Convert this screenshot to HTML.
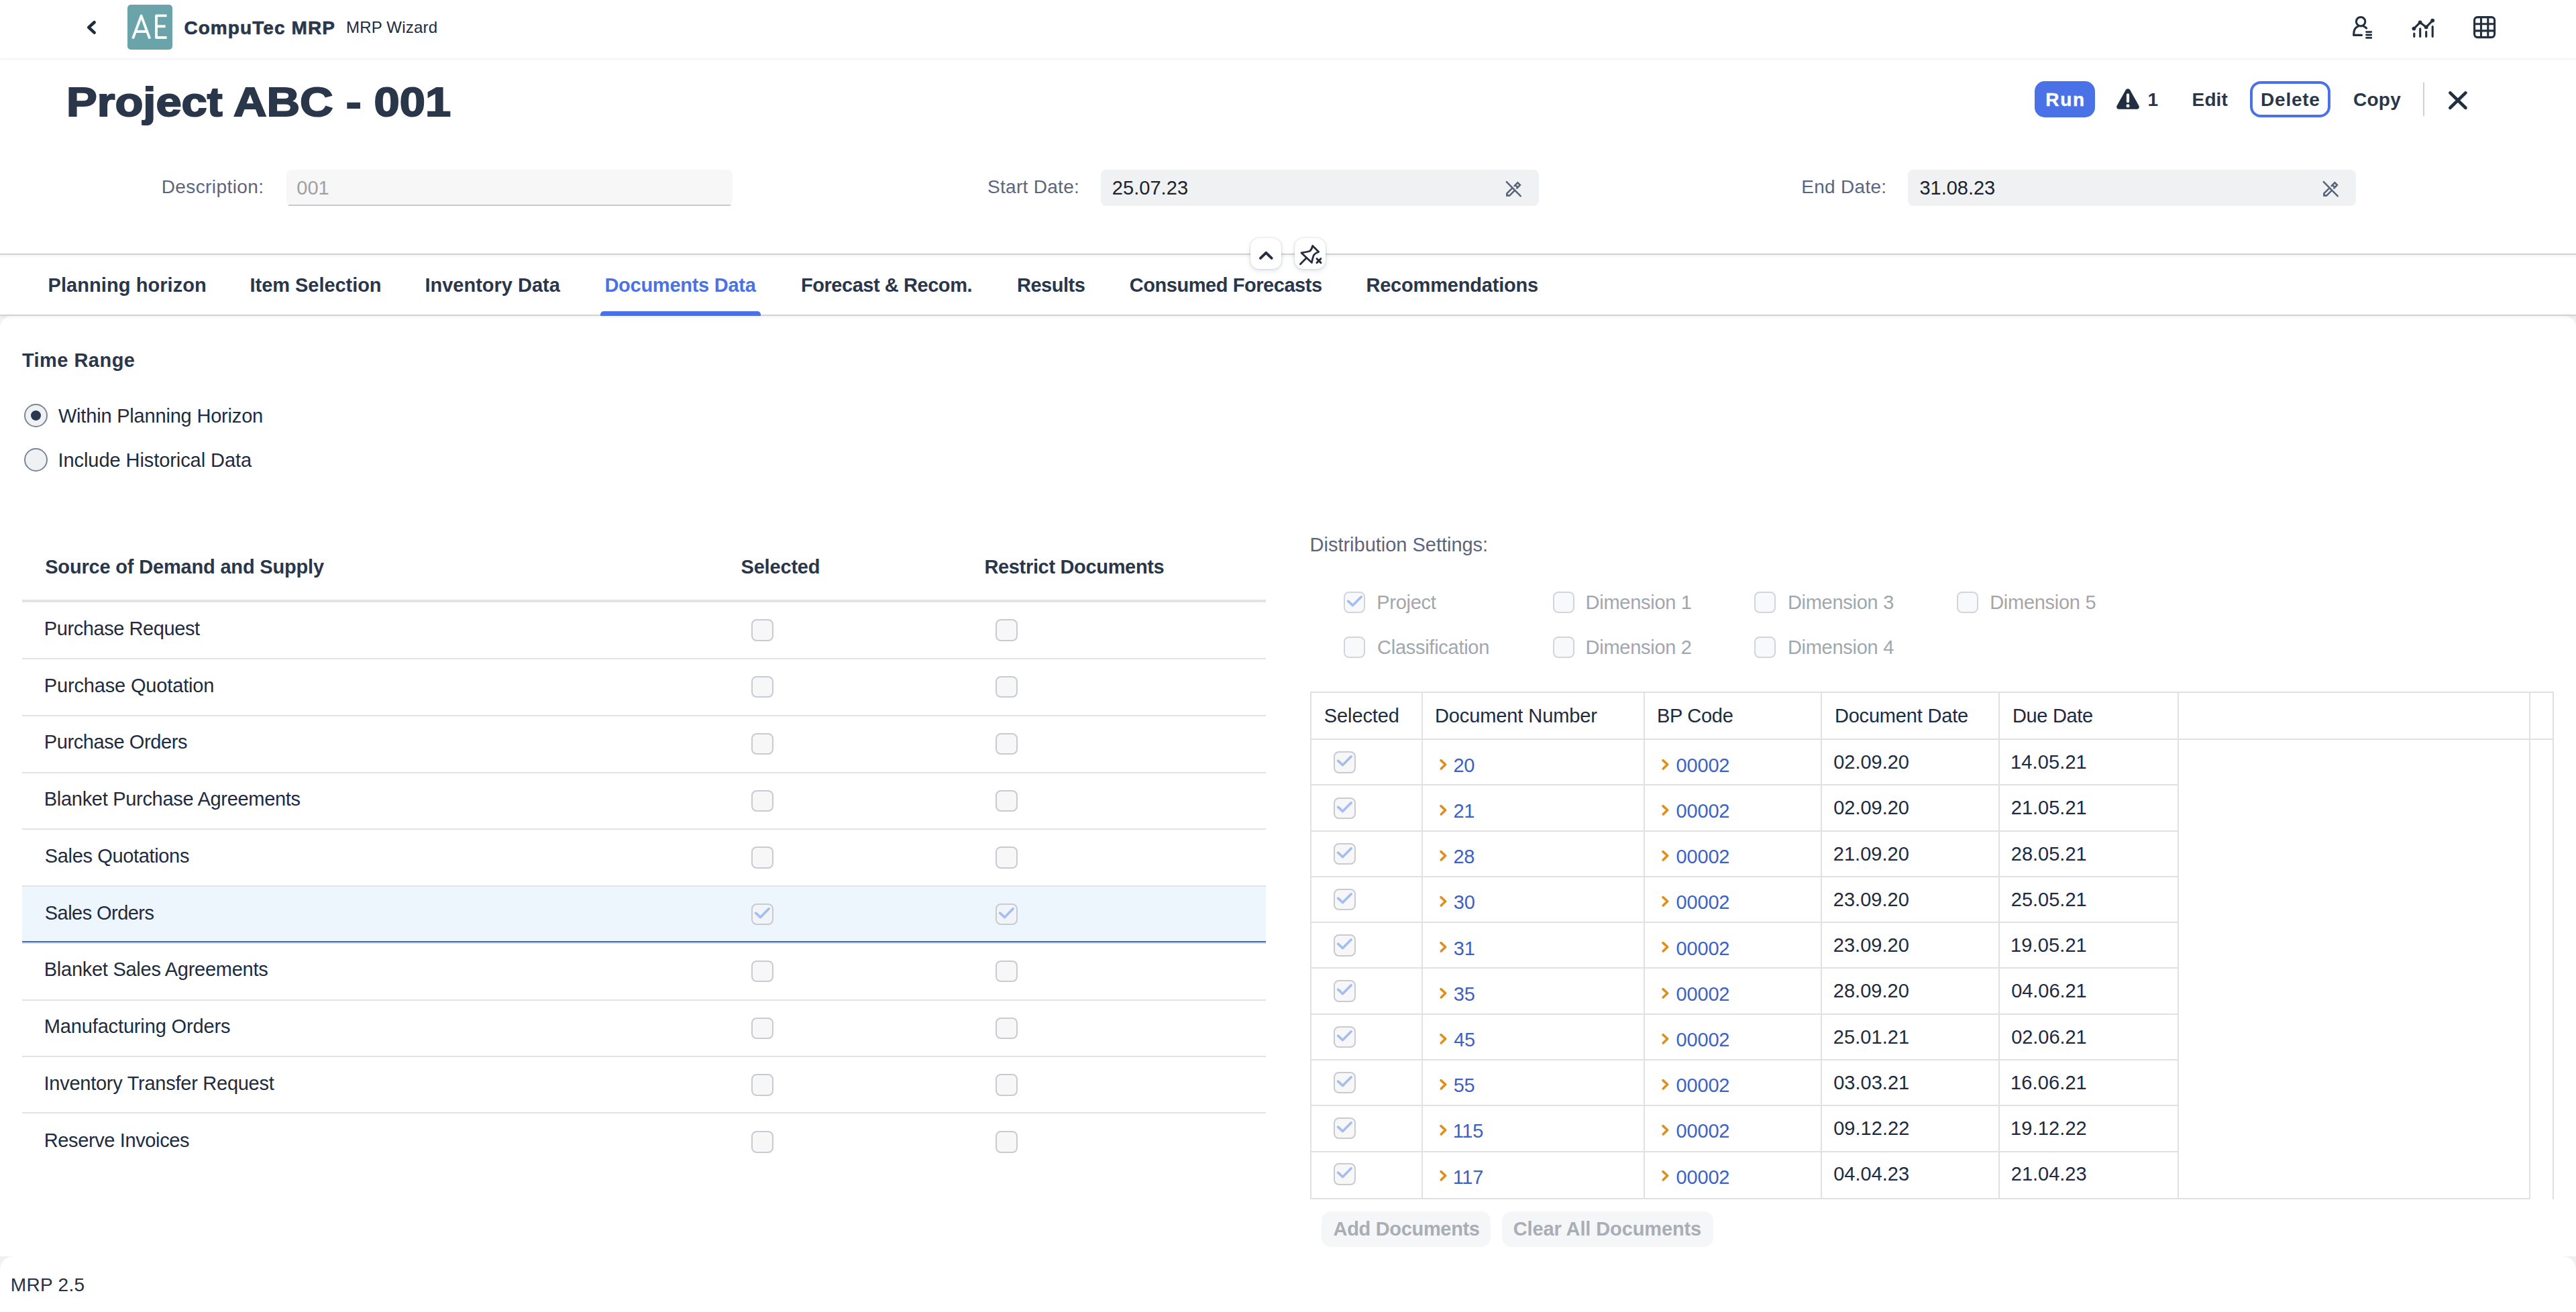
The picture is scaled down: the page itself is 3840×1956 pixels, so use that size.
<!DOCTYPE html>
<html><head><meta charset="utf-8"><title>MRP Wizard</title>
<style>
html,body{margin:0;padding:0;background:#fff;}
body{width:3840px;height:1956px;position:relative;overflow:hidden;font-family:"Liberation Sans",sans-serif;}
.t{position:absolute;white-space:nowrap;}
.b{position:absolute;}
</style></head><body>
<div class="b" style="left:0px;top:471px;width:3840px;height:40px;background:#f2f2f3"></div>
<div class="b" style="left:0px;top:471px;width:3840px;height:1402px;background:#fff;border-radius:18px 18px 0 0"></div>
<div class="b" style="left:0px;top:1873px;width:3840px;height:83px;background:#f0f0f1"></div>
<div class="b" style="left:0px;top:1873px;width:3840px;height:83px;background:#fff;border-radius:20px 20px 0 0"></div>
<div class="b" style="left:0px;top:0px;width:3840px;height:87px;background:#fff;box-shadow:0 1px 3px rgba(0,0,0,.08)"></div>
<svg class="b" style="left:120px;top:22px" width="36" height="38" viewBox="0 0 36 38"><path d="M20.6 11.2 L12.2 18.9 L20.6 26.6" fill="none" stroke="#1d2d3e" stroke-width="4.6" stroke-linecap="round" stroke-linejoin="round"/></svg>
<div class="b" style="left:190px;top:7px;width:67px;height:67px;background:#6ba3aa;border-radius:5px"></div>
<svg class="b" style="left:190px;top:7px" width="67" height="67" viewBox="0 0 67 67"><g fill="none" stroke="#fff" stroke-width="3.9" stroke-linejoin="round" opacity=".96"><path d="M8 50.6 L20.6 16.6 L33.2 50.6 M12 40 L29.2 40"/><path d="M58.6 16.4 L43 16.4 L43 49 L58.6 49 M43 32.2 L56.6 32.2"/></g></svg>
<div class="t" style="left:274.4px;top:28px;font-size:28px;line-height:28px;font-weight:700;color:#2a364a;letter-spacing:1.08px;-webkit-text-stroke:0.6px #2a364a;">CompuTec MRP</div>
<div class="t" style="left:516.0px;top:29px;font-size:24px;line-height:24px;font-weight:400;color:#202b3f;letter-spacing:0.20px;">MRP Wizard</div>
<svg class="b" style="left:3500px;top:18.5px" width="44" height="44" viewBox="0 0 44 44"><g fill="none" stroke="#222f40" stroke-width="3.1" stroke-linecap="round" stroke-linejoin="round">
<circle cx="19.1" cy="13.2" r="6.7"/><path d="M20.5 33.4 L8.6 33.4 C8.6 25 12 21.5 15 20.6 M23.5 20.4 C25 20.9 26.6 21.8 27.6 23"/>
<path d="M27.5 28.6 L34.8 28.6 M27.5 33 L34.8 33 M27.5 37.4 L34.8 37.4" stroke-width="2.8"/></g></svg>
<svg class="b" style="left:3590px;top:18px" width="44" height="44" viewBox="0 0 44 44"><g fill="none" stroke="#222f40" stroke-width="3.1" stroke-linecap="round" stroke-linejoin="round">
<path d="M8.4 24.6 L17.6 15.4 L26.7 22.4 L36.2 12.6"/><path d="M8.8 32 L8.8 36.4 M17.7 24.8 L17.7 36.4 M26.7 29.4 L26.7 36.4 M36.2 21.6 L36.2 36.4"/></g>
<g fill="#222f40"><circle cx="8.4" cy="24.6" r="2.9"/><circle cx="17.6" cy="15.4" r="2.9"/><circle cx="26.7" cy="22.4" r="2.9"/><circle cx="36.2" cy="12.6" r="2.9"/></g></svg>
<svg class="b" style="left:3680px;top:18px" width="44" height="44" viewBox="0 0 44 44"><g fill="none" stroke="#222f40" stroke-width="3.1">
<rect x="8.6" y="7.6" width="30" height="30" rx="4.5"/><path d="M18.5 7.6 V37.6 M28.8 7.6 V37.6 M8.6 17.8 H38.6 M8.6 27.9 H38.6"/></g></svg>
<div class="t" style="left:99.0px;top:121px;font-size:62px;line-height:62px;font-weight:700;color:#2a364a;-webkit-text-stroke:2.0px #2a364a;transform-origin:0 0;transform:scaleX(1.1063)">Project ABC - 001</div>
<div class="b" style="left:3033px;top:121px;width:90px;height:53.5px;background:#4a72e6;border-radius:15px"></div>
<div class="t" style="left:3049.3px;top:135px;font-size:28px;line-height:28px;font-weight:700;color:#fff;letter-spacing:1.74px;-webkit-text-stroke:0.4px #fff;">Run</div>
<svg class="b" style="left:3152px;top:128px" width="40" height="40" viewBox="0 0 40 40"><path d="M20 4.2 C21.6 4.2 22.6 5 23.3 6.2 L36.3 29.5 C37.8 32.2 36.2 34.8 33.2 34.8 L6.8 34.8 C3.8 34.8 2.2 32.2 3.7 29.5 L16.7 6.2 C17.4 5 18.4 4.2 20 4.2 Z" fill="#222f40"/><path d="M20 13.4 V23.2" stroke="#fff" stroke-width="4.2" stroke-linecap="round"/><circle cx="20" cy="29.8" r="2.5" fill="#fff"/></svg>
<div class="t" style="left:3201.5px;top:135px;font-size:28px;line-height:28px;font-weight:700;color:#2a364a;letter-spacing:0.00px;">1</div>
<div class="t" style="left:3267.6px;top:135px;font-size:28px;line-height:28px;font-weight:700;color:#2a364a;letter-spacing:0.11px;">Edit</div>
<div class="b" style="left:3354px;top:121px;width:120px;height:53.5px;box-sizing:border-box;border:4px solid #4a72e6;border-radius:16px;background:#fff"></div>
<div class="t" style="left:3370.1px;top:135px;font-size:28px;line-height:28px;font-weight:700;color:#2a364a;letter-spacing:0.76px;">Delete</div>
<div class="t" style="left:3507.9px;top:135px;font-size:28px;line-height:28px;font-weight:700;color:#2a364a;letter-spacing:0.27px;">Copy</div>
<div class="b" style="left:3612px;top:123px;width:2px;height:50px;background:#d0d0d3"></div>
<svg class="b" style="left:3644px;top:130px" width="40" height="40" viewBox="0 0 40 40"><path d="M8.4 8.4 L31.4 30.8 M31.4 8.4 L8.4 30.8" stroke="#222f40" stroke-width="4.7" stroke-linecap="round"/></svg>
<div class="t" style="left:240.7px;top:265px;font-size:28px;line-height:28px;font-weight:400;color:#5a6680;letter-spacing:0.41px;">Description:</div>
<div class="b" style="left:427px;top:253px;width:665px;height:53.5px;background:#f7f7f8;border-radius:8px"></div>
<div class="b" style="left:430px;top:305px;width:659px;height:2px;background:#c6c9cf"></div>
<div class="t" style="left:442.2px;top:266px;font-size:29px;line-height:29px;font-weight:400;color:#9fa0a3;letter-spacing:0.08px;">001</div>
<div class="t" style="left:1472.0px;top:265px;font-size:28px;line-height:28px;font-weight:400;color:#5a6680;letter-spacing:0.30px;">Start Date:</div>
<div class="b" style="left:1641px;top:253px;width:653px;height:53.5px;background:#eff1f2;border-radius:8px"></div>
<div class="t" style="left:1657.8px;top:266px;font-size:29px;line-height:29px;font-weight:400;color:#1d222c;letter-spacing:0.05px;">25.07.23</div>
<svg class="b" style="left:2240px;top:266px" width="32" height="32" viewBox="0 0 32 32"><g fill="none" stroke="#586377" stroke-width="2.5" stroke-linecap="round" stroke-linejoin="round">
<path d="M5.8 5.1 L26.8 26.4"/>
<path d="M13.4 15.3 L6.5 22.2 L6.5 25.55 L10.25 25.55 L17.4 18.4"/>
<path d="M17.6 11.1 L22.4 6.3 L25.95 9.85 L21.3 14.5 M18.86 9.84 L22.41 13.39" stroke-linejoin="miter"/></g>
<path d="M5.25 21.8 L5.25 26.8 L10.6 26.8 Z" fill="#586377"/></svg>
<div class="t" style="left:2685.3px;top:265px;font-size:28px;line-height:28px;font-weight:400;color:#5a6680;letter-spacing:0.29px;">End Date:</div>
<div class="b" style="left:2844px;top:253px;width:668px;height:53.5px;background:#eff1f2;border-radius:8px"></div>
<div class="t" style="left:2861.5px;top:266px;font-size:29px;line-height:29px;font-weight:400;color:#1d222c;letter-spacing:-0.03px;">31.08.23</div>
<svg class="b" style="left:3458px;top:266px" width="32" height="32" viewBox="0 0 32 32"><g fill="none" stroke="#586377" stroke-width="2.5" stroke-linecap="round" stroke-linejoin="round">
<path d="M5.8 5.1 L26.8 26.4"/>
<path d="M13.4 15.3 L6.5 22.2 L6.5 25.55 L10.25 25.55 L17.4 18.4"/>
<path d="M17.6 11.1 L22.4 6.3 L25.95 9.85 L21.3 14.5 M18.86 9.84 L22.41 13.39" stroke-linejoin="miter"/></g>
<path d="M5.25 21.8 L5.25 26.8 L10.6 26.8 Z" fill="#586377"/></svg>
<div class="b" style="left:0px;top:378px;width:3840px;height:2px;background:#d2d2d5;box-shadow:0 1px 4px rgba(0,0,0,.10)"></div>
<div class="b" style="left:1863.6px;top:355px;width:46.4px;height:46.4px;background:#fff;border-radius:13px;box-shadow:0 0 3px rgba(34,53,72,.22),0 3px 7px rgba(34,53,72,.13)"></div>
<svg class="b" style="left:1863.5px;top:355px" width="47" height="47" viewBox="0 0 47 47"><path d="M15 29.9 L23.3 21.9 L31.6 29.9" fill="none" stroke="#262c42" stroke-width="4" stroke-linecap="round" stroke-linejoin="round"/></svg>
<div class="b" style="left:1929.8px;top:355px;width:46.4px;height:46.4px;background:#fff;border-radius:13px;box-shadow:0 0 3px rgba(34,53,72,.22),0 3px 7px rgba(34,53,72,.13)"></div>
<svg class="b" style="left:1929.5px;top:355px" width="47" height="47" viewBox="0 0 47 47"><g fill="none" stroke="#262c42" stroke-width="2.8" stroke-linecap="round" stroke-linejoin="round">
<path d="M26.7 11.4 L35.7 20.5 Q30.4 22.4 28.3 25.6 Q26.4 30.6 25.4 36.6 L10 21.9 Q17.4 20.8 22.3 19.5 Q25.6 16.8 26.7 11.4 Z"/><path d="M16.8 30.3 L8.4 38.8"/>
<path d="M33 30.7 L38.9 36.6 M38.9 30.7 L33 36.6" stroke-width="3"/></g></svg>
<div class="t" style="left:71.6px;top:411px;font-size:29px;line-height:29px;font-weight:700;color:#2a364a;letter-spacing:0.06px;">Planning horizon</div>
<div class="t" style="left:372.6px;top:411px;font-size:29px;line-height:29px;font-weight:700;color:#2a364a;letter-spacing:-0.05px;">Item Selection</div>
<div class="t" style="left:633.4px;top:411px;font-size:29px;line-height:29px;font-weight:700;color:#2a364a;letter-spacing:0.00px;">Inventory Data</div>
<div class="t" style="left:901.4px;top:411px;font-size:29px;line-height:29px;font-weight:700;color:#4a72e6;letter-spacing:-0.26px;">Documents Data</div>
<div class="t" style="left:1193.9px;top:411px;font-size:29px;line-height:29px;font-weight:700;color:#2a364a;letter-spacing:-0.44px;">Forecast &amp; Recom.</div>
<div class="t" style="left:1516.0px;top:411px;font-size:29px;line-height:29px;font-weight:700;color:#2a364a;letter-spacing:-0.50px;">Results</div>
<div class="t" style="left:1683.7px;top:411px;font-size:29px;line-height:29px;font-weight:700;color:#2a364a;letter-spacing:-0.44px;">Consumed Forecasts</div>
<div class="t" style="left:2036.4px;top:411px;font-size:29px;line-height:29px;font-weight:700;color:#2a364a;letter-spacing:-0.19px;">Recommendations</div>
<div class="b" style="left:0px;top:469px;width:3840px;height:2px;background:#d2d2d5;box-shadow:0 1px 4px rgba(0,0,0,.10)"></div>
<div class="b" style="left:895px;top:464px;width:239px;height:7px;background:#4a72e6;border-radius:5px 5px 0 0"></div>
<div class="t" style="left:32.9px;top:523px;font-size:29px;line-height:29px;font-weight:700;color:#2a364a;letter-spacing:0.47px;">Time Range</div>
<div class="b" style="left:36px;top:601.9px;width:35px;height:35px;box-sizing:border-box;border:2px solid #7b879a;border-radius:50%;background:#f0f1f3"></div>
<div class="b" style="left:46.1px;top:612.0px;width:14.8px;height:14.8px;border-radius:50%;background:#29384c"></div>
<div class="t" style="left:86.9px;top:606px;font-size:29px;line-height:29px;font-weight:400;color:#202b3f;letter-spacing:-0.19px;">Within Planning Horizon</div>
<div class="b" style="left:36px;top:668.1px;width:35px;height:35px;box-sizing:border-box;border:2px solid #7b879a;border-radius:50%;background:#f0f1f3"></div>
<div class="t" style="left:86.5px;top:672px;font-size:29px;line-height:29px;font-weight:400;color:#202b3f;letter-spacing:-0.07px;">Include Historical Data</div>
<div class="t" style="left:67.2px;top:831px;font-size:29px;line-height:29px;font-weight:700;color:#2a364a;letter-spacing:-0.18px;">Source of Demand and Supply</div>
<div class="t" style="left:1104.5px;top:831px;font-size:29px;line-height:29px;font-weight:700;color:#2a364a;letter-spacing:-0.18px;">Selected</div>
<div class="t" style="left:1467.4px;top:831px;font-size:29px;line-height:29px;font-weight:700;color:#2a364a;letter-spacing:-0.33px;">Restrict Documents</div>
<div class="b" style="left:33px;top:894px;width:1854px;height:4px;background:#e3e3e5"></div>
<div class="b" style="left:33px;top:981px;width:1854px;height:2px;background:#e3e3e5"></div>
<div class="t" style="left:65.8px;top:923px;font-size:29px;line-height:29px;font-weight:400;color:#202b3f;letter-spacing:-0.42px;">Purchase Request</div>
<div class="b" style="left:1120.3px;top:923.3px;width:32.4px;height:32.4px;box-sizing:border-box;border:2px solid #c9cbd3;border-radius:8px;background:#f7f7f8"></div>
<div class="b" style="left:1484.2px;top:923.3px;width:32.4px;height:32.4px;box-sizing:border-box;border:2px solid #c9cbd3;border-radius:8px;background:#f7f7f8"></div>
<div class="b" style="left:33px;top:1066px;width:1854px;height:2px;background:#e3e3e5"></div>
<div class="t" style="left:65.8px;top:1008px;font-size:29px;line-height:29px;font-weight:400;color:#202b3f;letter-spacing:-0.16px;">Purchase Quotation</div>
<div class="b" style="left:1120.3px;top:1008.06px;width:32.4px;height:32.4px;box-sizing:border-box;border:2px solid #c9cbd3;border-radius:8px;background:#f7f7f8"></div>
<div class="b" style="left:1484.2px;top:1008.06px;width:32.4px;height:32.4px;box-sizing:border-box;border:2px solid #c9cbd3;border-radius:8px;background:#f7f7f8"></div>
<div class="b" style="left:33px;top:1151px;width:1854px;height:2px;background:#e3e3e5"></div>
<div class="t" style="left:65.8px;top:1092px;font-size:29px;line-height:29px;font-weight:400;color:#202b3f;letter-spacing:-0.40px;">Purchase Orders</div>
<div class="b" style="left:1120.3px;top:1092.82px;width:32.4px;height:32.4px;box-sizing:border-box;border:2px solid #c9cbd3;border-radius:8px;background:#f7f7f8"></div>
<div class="b" style="left:1484.2px;top:1092.82px;width:32.4px;height:32.4px;box-sizing:border-box;border:2px solid #c9cbd3;border-radius:8px;background:#f7f7f8"></div>
<div class="b" style="left:33px;top:1235px;width:1854px;height:2px;background:#e3e3e5"></div>
<div class="t" style="left:65.8px;top:1177px;font-size:29px;line-height:29px;font-weight:400;color:#202b3f;letter-spacing:-0.30px;">Blanket Purchase Agreements</div>
<div class="b" style="left:1120.3px;top:1177.58px;width:32.4px;height:32.4px;box-sizing:border-box;border:2px solid #c9cbd3;border-radius:8px;background:#f7f7f8"></div>
<div class="b" style="left:1484.2px;top:1177.58px;width:32.4px;height:32.4px;box-sizing:border-box;border:2px solid #c9cbd3;border-radius:8px;background:#f7f7f8"></div>
<div class="b" style="left:33px;top:1320px;width:1854px;height:2px;background:#e3e3e5"></div>
<div class="t" style="left:66.8px;top:1262px;font-size:29px;line-height:29px;font-weight:400;color:#202b3f;letter-spacing:-0.35px;">Sales Quotations</div>
<div class="b" style="left:1120.3px;top:1262.34px;width:32.4px;height:32.4px;box-sizing:border-box;border:2px solid #c9cbd3;border-radius:8px;background:#f7f7f8"></div>
<div class="b" style="left:1484.2px;top:1262.34px;width:32.4px;height:32.4px;box-sizing:border-box;border:2px solid #c9cbd3;border-radius:8px;background:#f7f7f8"></div>
<div class="b" style="left:33px;top:1322px;width:1854px;height:82px;background:#edf5fd"></div>
<div class="b" style="left:33px;top:1403px;width:1854px;height:2.2px;background:#4867b4"></div>
<div class="b" style="left:33px;top:1405.2px;width:1854px;height:1.4px;background:#d5e0f5"></div>
<div class="t" style="left:66.8px;top:1347px;font-size:29px;line-height:29px;font-weight:400;color:#202b3f;letter-spacing:-0.55px;">Sales Orders</div>
<div class="b" style="left:1120.3px;top:1347.1px;width:32.4px;height:32.4px;box-sizing:border-box;border:2px solid #c9cbd3;border-radius:8px;background:#f1f5fa"></div>
<svg class="b" style="left:1120.3px;top:1347.1px" width="32.4" height="32.4" viewBox="0 0 32.4 32.4"><path d="M6.6 14.2 L13.6 20.6 L26.2 7.8" fill="none" stroke="#a6bdf1" stroke-width="3.6" stroke-linecap="round" stroke-linejoin="round"/></svg>
<div class="b" style="left:1484.2px;top:1347.1px;width:32.4px;height:32.4px;box-sizing:border-box;border:2px solid #c9cbd3;border-radius:8px;background:#f1f5fa"></div>
<svg class="b" style="left:1484.2px;top:1347.1px" width="32.4" height="32.4" viewBox="0 0 32.4 32.4"><path d="M6.6 14.2 L13.6 20.6 L26.2 7.8" fill="none" stroke="#a6bdf1" stroke-width="3.6" stroke-linecap="round" stroke-linejoin="round"/></svg>
<div class="b" style="left:33px;top:1490px;width:1854px;height:2px;background:#e3e3e5"></div>
<div class="t" style="left:65.8px;top:1431px;font-size:29px;line-height:29px;font-weight:400;color:#202b3f;letter-spacing:-0.27px;">Blanket Sales Agreements</div>
<div class="b" style="left:1120.3px;top:1431.86px;width:32.4px;height:32.4px;box-sizing:border-box;border:2px solid #c9cbd3;border-radius:8px;background:#f7f7f8"></div>
<div class="b" style="left:1484.2px;top:1431.86px;width:32.4px;height:32.4px;box-sizing:border-box;border:2px solid #c9cbd3;border-radius:8px;background:#f7f7f8"></div>
<div class="b" style="left:33px;top:1574px;width:1854px;height:2px;background:#e3e3e5"></div>
<div class="t" style="left:65.8px;top:1516px;font-size:29px;line-height:29px;font-weight:400;color:#202b3f;letter-spacing:-0.15px;">Manufacturing Orders</div>
<div class="b" style="left:1120.3px;top:1516.6200000000001px;width:32.4px;height:32.4px;box-sizing:border-box;border:2px solid #c9cbd3;border-radius:8px;background:#f7f7f8"></div>
<div class="b" style="left:1484.2px;top:1516.6200000000001px;width:32.4px;height:32.4px;box-sizing:border-box;border:2px solid #c9cbd3;border-radius:8px;background:#f7f7f8"></div>
<div class="b" style="left:33px;top:1658px;width:1854px;height:2px;background:#e3e3e5"></div>
<div class="t" style="left:65.5px;top:1601px;font-size:29px;line-height:29px;font-weight:400;color:#202b3f;letter-spacing:-0.26px;">Inventory Transfer Request</div>
<div class="b" style="left:1120.3px;top:1601.3799999999999px;width:32.4px;height:32.4px;box-sizing:border-box;border:2px solid #c9cbd3;border-radius:8px;background:#f7f7f8"></div>
<div class="b" style="left:1484.2px;top:1601.3799999999999px;width:32.4px;height:32.4px;box-sizing:border-box;border:2px solid #c9cbd3;border-radius:8px;background:#f7f7f8"></div>
<div class="t" style="left:65.8px;top:1686px;font-size:29px;line-height:29px;font-weight:400;color:#202b3f;letter-spacing:-0.38px;">Reserve Invoices</div>
<div class="b" style="left:1120.3px;top:1686.14px;width:32.4px;height:32.4px;box-sizing:border-box;border:2px solid #c9cbd3;border-radius:8px;background:#f7f7f8"></div>
<div class="b" style="left:1484.2px;top:1686.14px;width:32.4px;height:32.4px;box-sizing:border-box;border:2px solid #c9cbd3;border-radius:8px;background:#f7f7f8"></div>
<div class="t" style="left:1952.6px;top:798px;font-size:29px;line-height:29px;font-weight:400;color:#5a6680;letter-spacing:-0.02px;">Distribution Settings:</div>
<div class="b" style="left:2003px;top:882px;width:32.4px;height:32.4px;box-sizing:border-box;border:2px solid #d3d5dc;border-radius:8px;background:#f8f9fa"></div>
<svg class="b" style="left:2003px;top:882px" width="32.4" height="32.4" viewBox="0 0 32.4 32.4"><path d="M6.6 14.2 L13.6 20.6 L26.2 7.8" fill="none" stroke="#a6bdf1" stroke-width="3.6" stroke-linecap="round" stroke-linejoin="round"/></svg>
<div class="t" style="left:2052.2px;top:884px;font-size:29px;line-height:29px;font-weight:400;color:#a2a6ad;letter-spacing:-0.28px;">Project</div>
<div class="b" style="left:2003px;top:949px;width:32.4px;height:32.4px;box-sizing:border-box;border:2px solid #d3d5dc;border-radius:8px;background:#f8f9fa"></div>
<div class="t" style="left:2053.1px;top:951px;font-size:29px;line-height:29px;font-weight:400;color:#a2a6ad;letter-spacing:-0.28px;">Classification</div>
<div class="b" style="left:2314.5px;top:882px;width:32.4px;height:32.4px;box-sizing:border-box;border:2px solid #d3d5dc;border-radius:8px;background:#f8f9fa"></div>
<div class="t" style="left:2363.6px;top:884px;font-size:29px;line-height:29px;font-weight:400;color:#a2a6ad;letter-spacing:-0.28px;">Dimension 1</div>
<div class="b" style="left:2314.5px;top:949px;width:32.4px;height:32.4px;box-sizing:border-box;border:2px solid #d3d5dc;border-radius:8px;background:#f8f9fa"></div>
<div class="t" style="left:2363.6px;top:951px;font-size:29px;line-height:29px;font-weight:400;color:#a2a6ad;letter-spacing:-0.28px;">Dimension 2</div>
<div class="b" style="left:2615px;top:882px;width:32.4px;height:32.4px;box-sizing:border-box;border:2px solid #d3d5dc;border-radius:8px;background:#f8f9fa"></div>
<div class="t" style="left:2664.9px;top:884px;font-size:29px;line-height:29px;font-weight:400;color:#a2a6ad;letter-spacing:-0.28px;">Dimension 3</div>
<div class="b" style="left:2615px;top:949px;width:32.4px;height:32.4px;box-sizing:border-box;border:2px solid #d3d5dc;border-radius:8px;background:#f8f9fa"></div>
<div class="t" style="left:2664.9px;top:951px;font-size:29px;line-height:29px;font-weight:400;color:#a2a6ad;letter-spacing:-0.28px;">Dimension 4</div>
<div class="b" style="left:2916.5px;top:882px;width:32.4px;height:32.4px;box-sizing:border-box;border:2px solid #d3d5dc;border-radius:8px;background:#f8f9fa"></div>
<div class="t" style="left:2966.2px;top:884px;font-size:29px;line-height:29px;font-weight:400;color:#a2a6ad;letter-spacing:-0.28px;">Dimension 5</div>
<div class="b" style="left:1953px;top:1031px;width:1854px;height:2px;background:#e1e1e3"></div>
<div class="b" style="left:1953px;top:1031px;width:2px;height:756.7px;background:#e1e1e3"></div>
<div class="b" style="left:3805px;top:1031px;width:2px;height:756.7px;background:#e1e1e3"></div>
<div class="b" style="left:3770px;top:1031px;width:2px;height:756.7px;background:#e1e1e3"></div>
<div class="b" style="left:1953px;top:1101px;width:1854px;height:2px;background:#e1e1e3"></div>
<div class="b" style="left:1953px;top:1785.7px;width:1819px;height:2px;background:#e1e1e3"></div>
<div class="b" style="left:2119px;top:1031px;width:2px;height:756.7px;background:#e1e1e3"></div>
<div class="b" style="left:2450px;top:1031px;width:2px;height:756.7px;background:#e1e1e3"></div>
<div class="b" style="left:2714px;top:1031px;width:2px;height:756.7px;background:#e1e1e3"></div>
<div class="b" style="left:2979px;top:1031px;width:2px;height:756.7px;background:#e1e1e3"></div>
<div class="b" style="left:3246px;top:1031px;width:2px;height:756.7px;background:#e1e1e3"></div>
<div class="b" style="left:1953px;top:1169px;width:1294px;height:2px;background:#e1e1e3"></div>
<div class="b" style="left:1953px;top:1238px;width:1294px;height:2px;background:#e1e1e3"></div>
<div class="b" style="left:1953px;top:1306px;width:1294px;height:2px;background:#e1e1e3"></div>
<div class="b" style="left:1953px;top:1374px;width:1294px;height:2px;background:#e1e1e3"></div>
<div class="b" style="left:1953px;top:1442px;width:1294px;height:2px;background:#e1e1e3"></div>
<div class="b" style="left:1953px;top:1511px;width:1294px;height:2px;background:#e1e1e3"></div>
<div class="b" style="left:1953px;top:1579px;width:1294px;height:2px;background:#e1e1e3"></div>
<div class="b" style="left:1953px;top:1647px;width:1294px;height:2px;background:#e1e1e3"></div>
<div class="b" style="left:1953px;top:1716px;width:1294px;height:2px;background:#e1e1e3"></div>
<div class="t" style="left:1973.8px;top:1053px;font-size:29px;line-height:29px;font-weight:400;color:#202b3f;letter-spacing:-0.10px;">Selected</div>
<div class="t" style="left:2138.9px;top:1053px;font-size:29px;line-height:29px;font-weight:400;color:#202b3f;letter-spacing:-0.09px;">Document Number</div>
<div class="t" style="left:2469.9px;top:1053px;font-size:29px;line-height:29px;font-weight:400;color:#202b3f;letter-spacing:-0.28px;">BP Code</div>
<div class="t" style="left:2734.9px;top:1053px;font-size:29px;line-height:29px;font-weight:400;color:#202b3f;letter-spacing:-0.18px;">Document Date</div>
<div class="t" style="left:2999.9px;top:1053px;font-size:29px;line-height:29px;font-weight:400;color:#202b3f;letter-spacing:-0.31px;">Due Date</div>
<div class="b" style="left:1988.3px;top:1120.4px;width:32.4px;height:32.4px;box-sizing:border-box;border:2px solid #c9cbd3;border-radius:8px;background:#f7f7f8"></div>
<svg class="b" style="left:1988.3px;top:1120.4px" width="32.4" height="32.4" viewBox="0 0 32.4 32.4"><path d="M6.6 14.2 L13.6 20.6 L26.2 7.8" fill="none" stroke="#a6bdf1" stroke-width="3.6" stroke-linecap="round" stroke-linejoin="round"/></svg>
<svg class="b" style="left:2143px;top:1128.6px" width="16" height="22" viewBox="0 0 16 22"><path d="M5 4.6 L11.7 10.8 L5.3 17" fill="none" stroke="#df8f1c" stroke-width="3.6" stroke-linecap="round" stroke-linejoin="round"/></svg>
<div class="t" style="left:2166.4px;top:1127px;font-size:29px;line-height:29px;font-weight:400;color:#3b62c4;letter-spacing:-0.30px;">20</div>
<svg class="b" style="left:2474px;top:1128.6px" width="16" height="22" viewBox="0 0 16 22"><path d="M5 4.6 L11.7 10.8 L5.3 17" fill="none" stroke="#df8f1c" stroke-width="3.6" stroke-linecap="round" stroke-linejoin="round"/></svg>
<div class="t" style="left:2498.6px;top:1127px;font-size:29px;line-height:29px;font-weight:400;color:#3b62c4;letter-spacing:-0.19px;">00002</div>
<div class="t" style="left:2733.2px;top:1122px;font-size:29px;line-height:29px;font-weight:400;color:#202b3f;letter-spacing:-0.02px;">02.09.20</div>
<div class="t" style="left:2997.1px;top:1122px;font-size:29px;line-height:29px;font-weight:400;color:#202b3f;letter-spacing:0.11px;">14.05.21</div>
<div class="b" style="left:1988.3px;top:1188.6px;width:32.4px;height:32.4px;box-sizing:border-box;border:2px solid #c9cbd3;border-radius:8px;background:#f7f7f8"></div>
<svg class="b" style="left:1988.3px;top:1188.6px" width="32.4" height="32.4" viewBox="0 0 32.4 32.4"><path d="M6.6 14.2 L13.6 20.6 L26.2 7.8" fill="none" stroke="#a6bdf1" stroke-width="3.6" stroke-linecap="round" stroke-linejoin="round"/></svg>
<svg class="b" style="left:2143px;top:1196.8px" width="16" height="22" viewBox="0 0 16 22"><path d="M5 4.6 L11.7 10.8 L5.3 17" fill="none" stroke="#df8f1c" stroke-width="3.6" stroke-linecap="round" stroke-linejoin="round"/></svg>
<div class="t" style="left:2166.4px;top:1195px;font-size:29px;line-height:29px;font-weight:400;color:#3b62c4;letter-spacing:-0.30px;">21</div>
<svg class="b" style="left:2474px;top:1196.8px" width="16" height="22" viewBox="0 0 16 22"><path d="M5 4.6 L11.7 10.8 L5.3 17" fill="none" stroke="#df8f1c" stroke-width="3.6" stroke-linecap="round" stroke-linejoin="round"/></svg>
<div class="t" style="left:2498.6px;top:1195px;font-size:29px;line-height:29px;font-weight:400;color:#3b62c4;letter-spacing:-0.19px;">00002</div>
<div class="t" style="left:2733.2px;top:1190px;font-size:29px;line-height:29px;font-weight:400;color:#202b3f;letter-spacing:-0.02px;">02.09.20</div>
<div class="t" style="left:2997.8px;top:1190px;font-size:29px;line-height:29px;font-weight:400;color:#202b3f;letter-spacing:-0.00px;">21.05.21</div>
<div class="b" style="left:1988.3px;top:1256.8px;width:32.4px;height:32.4px;box-sizing:border-box;border:2px solid #c9cbd3;border-radius:8px;background:#f7f7f8"></div>
<svg class="b" style="left:1988.3px;top:1256.8px" width="32.4" height="32.4" viewBox="0 0 32.4 32.4"><path d="M6.6 14.2 L13.6 20.6 L26.2 7.8" fill="none" stroke="#a6bdf1" stroke-width="3.6" stroke-linecap="round" stroke-linejoin="round"/></svg>
<svg class="b" style="left:2143px;top:1265.0px" width="16" height="22" viewBox="0 0 16 22"><path d="M5 4.6 L11.7 10.8 L5.3 17" fill="none" stroke="#df8f1c" stroke-width="3.6" stroke-linecap="round" stroke-linejoin="round"/></svg>
<div class="t" style="left:2166.4px;top:1263px;font-size:29px;line-height:29px;font-weight:400;color:#3b62c4;letter-spacing:-0.30px;">28</div>
<svg class="b" style="left:2474px;top:1265.0px" width="16" height="22" viewBox="0 0 16 22"><path d="M5 4.6 L11.7 10.8 L5.3 17" fill="none" stroke="#df8f1c" stroke-width="3.6" stroke-linecap="round" stroke-linejoin="round"/></svg>
<div class="t" style="left:2498.6px;top:1263px;font-size:29px;line-height:29px;font-weight:400;color:#3b62c4;letter-spacing:-0.19px;">00002</div>
<div class="t" style="left:2732.8px;top:1259px;font-size:29px;line-height:29px;font-weight:400;color:#202b3f;letter-spacing:0.03px;">21.09.20</div>
<div class="t" style="left:2997.8px;top:1259px;font-size:29px;line-height:29px;font-weight:400;color:#202b3f;letter-spacing:-0.00px;">28.05.21</div>
<div class="b" style="left:1988.3px;top:1325.0px;width:32.4px;height:32.4px;box-sizing:border-box;border:2px solid #c9cbd3;border-radius:8px;background:#f7f7f8"></div>
<svg class="b" style="left:1988.3px;top:1325.0px" width="32.4" height="32.4" viewBox="0 0 32.4 32.4"><path d="M6.6 14.2 L13.6 20.6 L26.2 7.8" fill="none" stroke="#a6bdf1" stroke-width="3.6" stroke-linecap="round" stroke-linejoin="round"/></svg>
<svg class="b" style="left:2143px;top:1333.2px" width="16" height="22" viewBox="0 0 16 22"><path d="M5 4.6 L11.7 10.8 L5.3 17" fill="none" stroke="#df8f1c" stroke-width="3.6" stroke-linecap="round" stroke-linejoin="round"/></svg>
<div class="t" style="left:2166.8px;top:1331px;font-size:29px;line-height:29px;font-weight:400;color:#3b62c4;letter-spacing:-0.30px;">30</div>
<svg class="b" style="left:2474px;top:1333.2px" width="16" height="22" viewBox="0 0 16 22"><path d="M5 4.6 L11.7 10.8 L5.3 17" fill="none" stroke="#df8f1c" stroke-width="3.6" stroke-linecap="round" stroke-linejoin="round"/></svg>
<div class="t" style="left:2498.6px;top:1331px;font-size:29px;line-height:29px;font-weight:400;color:#3b62c4;letter-spacing:-0.19px;">00002</div>
<div class="t" style="left:2732.8px;top:1327px;font-size:29px;line-height:29px;font-weight:400;color:#202b3f;letter-spacing:0.03px;">23.09.20</div>
<div class="t" style="left:2997.8px;top:1327px;font-size:29px;line-height:29px;font-weight:400;color:#202b3f;letter-spacing:-0.00px;">25.05.21</div>
<div class="b" style="left:1988.3px;top:1393.2px;width:32.4px;height:32.4px;box-sizing:border-box;border:2px solid #c9cbd3;border-radius:8px;background:#f7f7f8"></div>
<svg class="b" style="left:1988.3px;top:1393.2px" width="32.4" height="32.4" viewBox="0 0 32.4 32.4"><path d="M6.6 14.2 L13.6 20.6 L26.2 7.8" fill="none" stroke="#a6bdf1" stroke-width="3.6" stroke-linecap="round" stroke-linejoin="round"/></svg>
<svg class="b" style="left:2143px;top:1401.4px" width="16" height="22" viewBox="0 0 16 22"><path d="M5 4.6 L11.7 10.8 L5.3 17" fill="none" stroke="#df8f1c" stroke-width="3.6" stroke-linecap="round" stroke-linejoin="round"/></svg>
<div class="t" style="left:2166.8px;top:1400px;font-size:29px;line-height:29px;font-weight:400;color:#3b62c4;letter-spacing:-0.30px;">31</div>
<svg class="b" style="left:2474px;top:1401.4px" width="16" height="22" viewBox="0 0 16 22"><path d="M5 4.6 L11.7 10.8 L5.3 17" fill="none" stroke="#df8f1c" stroke-width="3.6" stroke-linecap="round" stroke-linejoin="round"/></svg>
<div class="t" style="left:2498.6px;top:1400px;font-size:29px;line-height:29px;font-weight:400;color:#3b62c4;letter-spacing:-0.19px;">00002</div>
<div class="t" style="left:2732.8px;top:1395px;font-size:29px;line-height:29px;font-weight:400;color:#202b3f;letter-spacing:0.03px;">23.09.20</div>
<div class="t" style="left:2997.1px;top:1395px;font-size:29px;line-height:29px;font-weight:400;color:#202b3f;letter-spacing:0.11px;">19.05.21</div>
<div class="b" style="left:1988.3px;top:1461.4px;width:32.4px;height:32.4px;box-sizing:border-box;border:2px solid #c9cbd3;border-radius:8px;background:#f7f7f8"></div>
<svg class="b" style="left:1988.3px;top:1461.4px" width="32.4" height="32.4" viewBox="0 0 32.4 32.4"><path d="M6.6 14.2 L13.6 20.6 L26.2 7.8" fill="none" stroke="#a6bdf1" stroke-width="3.6" stroke-linecap="round" stroke-linejoin="round"/></svg>
<svg class="b" style="left:2143px;top:1469.6px" width="16" height="22" viewBox="0 0 16 22"><path d="M5 4.6 L11.7 10.8 L5.3 17" fill="none" stroke="#df8f1c" stroke-width="3.6" stroke-linecap="round" stroke-linejoin="round"/></svg>
<div class="t" style="left:2166.8px;top:1468px;font-size:29px;line-height:29px;font-weight:400;color:#3b62c4;letter-spacing:-0.30px;">35</div>
<svg class="b" style="left:2474px;top:1469.6px" width="16" height="22" viewBox="0 0 16 22"><path d="M5 4.6 L11.7 10.8 L5.3 17" fill="none" stroke="#df8f1c" stroke-width="3.6" stroke-linecap="round" stroke-linejoin="round"/></svg>
<div class="t" style="left:2498.6px;top:1468px;font-size:29px;line-height:29px;font-weight:400;color:#3b62c4;letter-spacing:-0.19px;">00002</div>
<div class="t" style="left:2732.8px;top:1463px;font-size:29px;line-height:29px;font-weight:400;color:#202b3f;letter-spacing:0.03px;">28.09.20</div>
<div class="t" style="left:2998.2px;top:1463px;font-size:29px;line-height:29px;font-weight:400;color:#202b3f;letter-spacing:-0.05px;">04.06.21</div>
<div class="b" style="left:1988.3px;top:1529.6px;width:32.4px;height:32.4px;box-sizing:border-box;border:2px solid #c9cbd3;border-radius:8px;background:#f7f7f8"></div>
<svg class="b" style="left:1988.3px;top:1529.6px" width="32.4" height="32.4" viewBox="0 0 32.4 32.4"><path d="M6.6 14.2 L13.6 20.6 L26.2 7.8" fill="none" stroke="#a6bdf1" stroke-width="3.6" stroke-linecap="round" stroke-linejoin="round"/></svg>
<svg class="b" style="left:2143px;top:1537.8px" width="16" height="22" viewBox="0 0 16 22"><path d="M5 4.6 L11.7 10.8 L5.3 17" fill="none" stroke="#df8f1c" stroke-width="3.6" stroke-linecap="round" stroke-linejoin="round"/></svg>
<div class="t" style="left:2167.2px;top:1536px;font-size:29px;line-height:29px;font-weight:400;color:#3b62c4;letter-spacing:-0.30px;">45</div>
<svg class="b" style="left:2474px;top:1537.8px" width="16" height="22" viewBox="0 0 16 22"><path d="M5 4.6 L11.7 10.8 L5.3 17" fill="none" stroke="#df8f1c" stroke-width="3.6" stroke-linecap="round" stroke-linejoin="round"/></svg>
<div class="t" style="left:2498.6px;top:1536px;font-size:29px;line-height:29px;font-weight:400;color:#3b62c4;letter-spacing:-0.19px;">00002</div>
<div class="t" style="left:2732.8px;top:1532px;font-size:29px;line-height:29px;font-weight:400;color:#202b3f;letter-spacing:0.07px;">25.01.21</div>
<div class="t" style="left:2998.2px;top:1532px;font-size:29px;line-height:29px;font-weight:400;color:#202b3f;letter-spacing:-0.05px;">02.06.21</div>
<div class="b" style="left:1988.3px;top:1597.8px;width:32.4px;height:32.4px;box-sizing:border-box;border:2px solid #c9cbd3;border-radius:8px;background:#f7f7f8"></div>
<svg class="b" style="left:1988.3px;top:1597.8px" width="32.4" height="32.4" viewBox="0 0 32.4 32.4"><path d="M6.6 14.2 L13.6 20.6 L26.2 7.8" fill="none" stroke="#a6bdf1" stroke-width="3.6" stroke-linecap="round" stroke-linejoin="round"/></svg>
<svg class="b" style="left:2143px;top:1606.0px" width="16" height="22" viewBox="0 0 16 22"><path d="M5 4.6 L11.7 10.8 L5.3 17" fill="none" stroke="#df8f1c" stroke-width="3.6" stroke-linecap="round" stroke-linejoin="round"/></svg>
<div class="t" style="left:2166.7px;top:1604px;font-size:29px;line-height:29px;font-weight:400;color:#3b62c4;letter-spacing:-0.30px;">55</div>
<svg class="b" style="left:2474px;top:1606.0px" width="16" height="22" viewBox="0 0 16 22"><path d="M5 4.6 L11.7 10.8 L5.3 17" fill="none" stroke="#df8f1c" stroke-width="3.6" stroke-linecap="round" stroke-linejoin="round"/></svg>
<div class="t" style="left:2498.6px;top:1604px;font-size:29px;line-height:29px;font-weight:400;color:#3b62c4;letter-spacing:-0.19px;">00002</div>
<div class="t" style="left:2733.2px;top:1600px;font-size:29px;line-height:29px;font-weight:400;color:#202b3f;letter-spacing:0.02px;">03.03.21</div>
<div class="t" style="left:2997.1px;top:1600px;font-size:29px;line-height:29px;font-weight:400;color:#202b3f;letter-spacing:0.11px;">16.06.21</div>
<div class="b" style="left:1988.3px;top:1666.0px;width:32.4px;height:32.4px;box-sizing:border-box;border:2px solid #c9cbd3;border-radius:8px;background:#f7f7f8"></div>
<svg class="b" style="left:1988.3px;top:1666.0px" width="32.4" height="32.4" viewBox="0 0 32.4 32.4"><path d="M6.6 14.2 L13.6 20.6 L26.2 7.8" fill="none" stroke="#a6bdf1" stroke-width="3.6" stroke-linecap="round" stroke-linejoin="round"/></svg>
<svg class="b" style="left:2143px;top:1674.2px" width="16" height="22" viewBox="0 0 16 22"><path d="M5 4.6 L11.7 10.8 L5.3 17" fill="none" stroke="#df8f1c" stroke-width="3.6" stroke-linecap="round" stroke-linejoin="round"/></svg>
<div class="t" style="left:2165.7px;top:1672px;font-size:29px;line-height:29px;font-weight:400;color:#3b62c4;letter-spacing:-0.30px;">115</div>
<svg class="b" style="left:2474px;top:1674.2px" width="16" height="22" viewBox="0 0 16 22"><path d="M5 4.6 L11.7 10.8 L5.3 17" fill="none" stroke="#df8f1c" stroke-width="3.6" stroke-linecap="round" stroke-linejoin="round"/></svg>
<div class="t" style="left:2498.6px;top:1672px;font-size:29px;line-height:29px;font-weight:400;color:#3b62c4;letter-spacing:-0.19px;">00002</div>
<div class="t" style="left:2733.2px;top:1668px;font-size:29px;line-height:29px;font-weight:400;color:#202b3f;letter-spacing:0.03px;">09.12.22</div>
<div class="t" style="left:2997.1px;top:1668px;font-size:29px;line-height:29px;font-weight:400;color:#202b3f;letter-spacing:0.11px;">19.12.22</div>
<div class="b" style="left:1988.3px;top:1734.2px;width:32.4px;height:32.4px;box-sizing:border-box;border:2px solid #c9cbd3;border-radius:8px;background:#f7f7f8"></div>
<svg class="b" style="left:1988.3px;top:1734.2px" width="32.4" height="32.4" viewBox="0 0 32.4 32.4"><path d="M6.6 14.2 L13.6 20.6 L26.2 7.8" fill="none" stroke="#a6bdf1" stroke-width="3.6" stroke-linecap="round" stroke-linejoin="round"/></svg>
<svg class="b" style="left:2143px;top:1742.4px" width="16" height="22" viewBox="0 0 16 22"><path d="M5 4.6 L11.7 10.8 L5.3 17" fill="none" stroke="#df8f1c" stroke-width="3.6" stroke-linecap="round" stroke-linejoin="round"/></svg>
<div class="t" style="left:2165.7px;top:1741px;font-size:29px;line-height:29px;font-weight:400;color:#3b62c4;letter-spacing:-0.30px;">117</div>
<svg class="b" style="left:2474px;top:1742.4px" width="16" height="22" viewBox="0 0 16 22"><path d="M5 4.6 L11.7 10.8 L5.3 17" fill="none" stroke="#df8f1c" stroke-width="3.6" stroke-linecap="round" stroke-linejoin="round"/></svg>
<div class="t" style="left:2498.6px;top:1741px;font-size:29px;line-height:29px;font-weight:400;color:#3b62c4;letter-spacing:-0.19px;">00002</div>
<div class="t" style="left:2733.2px;top:1736px;font-size:29px;line-height:29px;font-weight:400;color:#202b3f;letter-spacing:0.00px;">04.04.23</div>
<div class="t" style="left:2997.8px;top:1736px;font-size:29px;line-height:29px;font-weight:400;color:#202b3f;letter-spacing:-0.02px;">21.04.23</div>
<div class="b" style="left:1970px;top:1806px;width:252px;height:53px;background:#f5f6f7;border-radius:14px"></div>
<div class="t" style="left:1987.6px;top:1818px;font-size:29px;line-height:29px;font-weight:700;color:#a9adb6;letter-spacing:-0.33px;">Add Documents</div>
<div class="b" style="left:2238.5px;top:1806px;width:315px;height:53px;background:#f5f6f7;border-radius:14px"></div>
<div class="t" style="left:2255.8px;top:1818px;font-size:29px;line-height:29px;font-weight:700;color:#a9adb6;letter-spacing:-0.12px;">Clear All Documents</div>
<div class="t" style="left:15.8px;top:1902px;font-size:28px;line-height:28px;font-weight:400;color:#263142;letter-spacing:0.32px;">MRP 2.5</div>
</body></html>
